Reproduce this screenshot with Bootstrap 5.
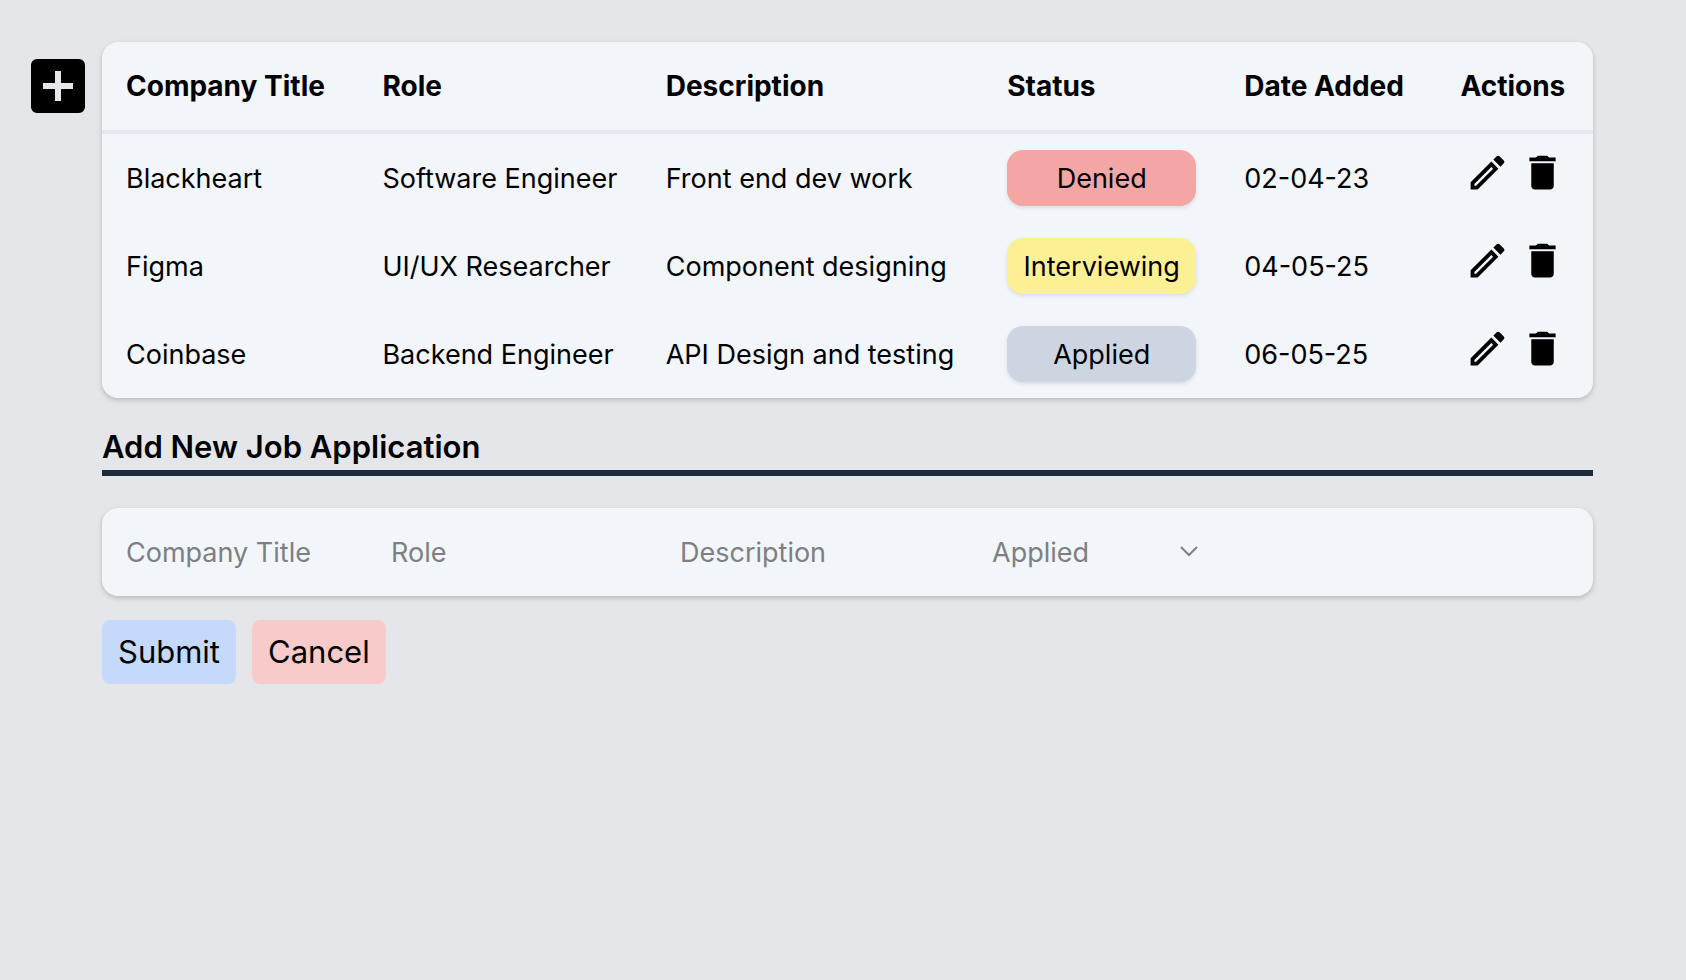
<!DOCTYPE html>
<html lang="en">
<head>
<meta charset="utf-8">
<meta name="viewport" content="width=device-width, initial-scale=1">
<title>Job Applications</title>
<link rel="stylesheet" href="https://cdn.jsdelivr.net/npm/bootstrap@5.3.0/dist/css/bootstrap.min.css">
<style>
  body { background: #e5e6ea; color: #000; font-family: Inter, "Liberation Sans", sans-serif; font-size: 27px; line-height: 40px; }
  .page { padding: 42px 93px 42px 22px; }
  .page button svg { display: block; fill: #000; }
  .add-btn { margin-top: 8px; margin-right: 8px; line-height: 0; }
  .panel { background: #f2f5fa; border-radius: 16px; box-shadow: 0 2px 6px rgba(0,0,0,.1), 0 2px 4px rgba(0,0,0,.1); overflow: hidden; }
  .jobs { table-layout: fixed; width: 100%; white-space: nowrap; border-collapse: separate; border-spacing: 0; }
  .jobs th, .jobs td { height: 88px; padding: 2px 24px 0; vertical-align: middle; }
  .jobs th { height: 92px; padding-top: 0; border-bottom: 4px solid #e3e7f0; font-size: 28px; font-weight: 700; }
  .jobs .flush { padding-top: 0; }
  .w-company { width: 17.2%; } .w-role { width: 19%; } .w-desc { width: 22.9%; }
  .w-status { width: 15.9%; } .w-date { width: 14.5%; } .w-actions { width: 10.5%; }
  .state { height: 56px; line-height: 58px; border-radius: 16px; text-align: center; box-shadow: 0 2px 4px rgba(0,0,0,.1); }
  .denied { background: #f4a6a5; } .interviewing { background: #fcf095; } .applied { background: #cdd4e2; }
  .jobs .acts { gap: 10px; padding-bottom: 12px; }
  .form-title { font-size: 31px; font-weight: 600; line-height: 46px; margin: 24px 0 32px; padding-top: 2px; border-bottom: 6px solid #1e293b; }
  .fields { display: grid; grid-template-columns: 265fr 289fr 312fr 207fr 372fr; height: 88px; padding: 2px 22px 0 24px; align-items: center; }
  .fields .form-control, .fields .form-select { font-size: 27px; line-height: 40px; padding: 0; border: 0; border-radius: 0; background-color: transparent; color: #7e7f82; box-shadow: none; }
  .fields .form-control::placeholder { color: #7e7f82; opacity: 1; }
  .fields .form-select { background-image: url("data:image/svg+xml,%3Csvg xmlns='http://www.w3.org/2000/svg' viewBox='0 0 20 12'%3E%3Cpath d='M2 2l8 8 8-8' fill='none' stroke='%23808184' stroke-width='2'/%3E%3C/svg%3E"); background-size: 20px 12px; background-position: right 0 top 12px; }
  .action-btn { --bs-btn-color: #000; --bs-btn-hover-color: #000; --bs-btn-font-size: 31px; --bs-btn-line-height: 48px; --bs-btn-padding-x: 16px; --bs-btn-padding-y: 8px; --bs-btn-border-width: 0; --bs-btn-border-radius: 8px; }
  .submit { --bs-btn-bg: #c4d9fc; --bs-btn-hover-bg: #adcafb; }
  .cancel { --bs-btn-bg: #f7cbca; --bs-btn-hover-bg: #f3b5b4; }
</style>
</head>
<body>
<svg class="d-none" aria-hidden="true">
  <symbol id="edit" viewBox="0 0 24 24"><path d="M14.06 9.02l.92.92L5.92 19H5v-.92l9.06-9.06M17.66 3c-.25 0-.51.1-.7.29l-1.83 1.83 3.75 3.75 1.83-1.83c.39-.39.39-1.02 0-1.41l-2.34-2.34c-.2-.2-.45-.29-.71-.29zm-3.6 3.19L3 17.25V21h3.75L17.81 9.94l-3.75-3.75z"/></symbol>
  <symbol id="trash" viewBox="0 0 24 24"><path d="M6 19c0 1.1.9 2 2 2h8c1.1 0 2-.9 2-2V7H6v12zM19 4h-3.5l-1-1h-5l-1 1H5v2h14V4z"/></symbol>
</svg>
<div class="page d-flex align-items-start">
  <button type="button" class="add-btn btn p-0 border-0 flex-shrink-0" aria-label="Add application">
    <svg width="72" height="72" viewBox="0 0 24 24"><path d="M19 3H5a2 2 0 0 0-2 2v14a2 2 0 0 0 2 2h14a2 2 0 0 0 2-2V5a2 2 0 0 0-2-2zm-2 10h-4v4h-2v-4H7v-2h4V7h2v4h4v2z"/></svg>
  </button>
  <main class="flex-grow-1">
    <div class="panel">
      <table class="jobs">
        <thead>
          <tr><th class="w-company">Company Title</th><th class="w-role">Role</th><th class="w-desc">Description</th><th class="w-status">Status</th><th class="w-date">Date Added</th><th class="w-actions">Actions</th></tr>
        </thead>
        <tbody>
          <tr><td>Blackheart</td><td>Software Engineer</td><td>Front end dev work</td><td class="flush"><div class="state denied">Denied</div></td><td>02-04-23</td>
            <td class="flush"><div class="acts d-flex justify-content-center"><button type="button" class="btn p-0 border-0" aria-label="Edit"><svg width="45" height="45"><use href="#edit"/></svg></button><button type="button" class="btn p-0 border-0" aria-label="Delete"><svg width="45" height="45"><use href="#trash"/></svg></button></div></td></tr>
          <tr><td>Figma</td><td>UI/UX Researcher</td><td>Component designing</td><td class="flush"><div class="state interviewing">Interviewing</div></td><td>04-05-25</td>
            <td class="flush"><div class="acts d-flex justify-content-center"><button type="button" class="btn p-0 border-0" aria-label="Edit"><svg width="45" height="45"><use href="#edit"/></svg></button><button type="button" class="btn p-0 border-0" aria-label="Delete"><svg width="45" height="45"><use href="#trash"/></svg></button></div></td></tr>
          <tr><td>Coinbase</td><td>Backend Engineer</td><td>API Design and testing</td><td class="flush"><div class="state applied">Applied</div></td><td>06-05-25</td>
            <td class="flush"><div class="acts d-flex justify-content-center"><button type="button" class="btn p-0 border-0" aria-label="Edit"><svg width="45" height="45"><use href="#edit"/></svg></button><button type="button" class="btn p-0 border-0" aria-label="Delete"><svg width="45" height="45"><use href="#trash"/></svg></button></div></td></tr>
        </tbody>
      </table>
    </div>
    <form>
      <h2 class="form-title">Add New Job Application</h2>
      <div class="panel fields">
        <input class="form-control" type="text" placeholder="Company Title" aria-label="Company Title">
        <input class="form-control" type="text" placeholder="Role" aria-label="Role">
        <input class="form-control" type="text" placeholder="Description" aria-label="Description">
        <select class="form-select" aria-label="Status"><option>Applied</option><option>Interviewing</option><option>Denied</option></select>
      </div>
      <div class="d-flex gap-3 mt-4">
        <button type="submit" class="btn action-btn submit">Submit</button>
        <button type="button" class="btn action-btn cancel">Cancel</button>
      </div>
    </form>
  </main>
</div>
<script src="https://cdn.jsdelivr.net/npm/bootstrap@5.3.0/dist/js/bootstrap.bundle.min.js"></script>
</body>
</html>
